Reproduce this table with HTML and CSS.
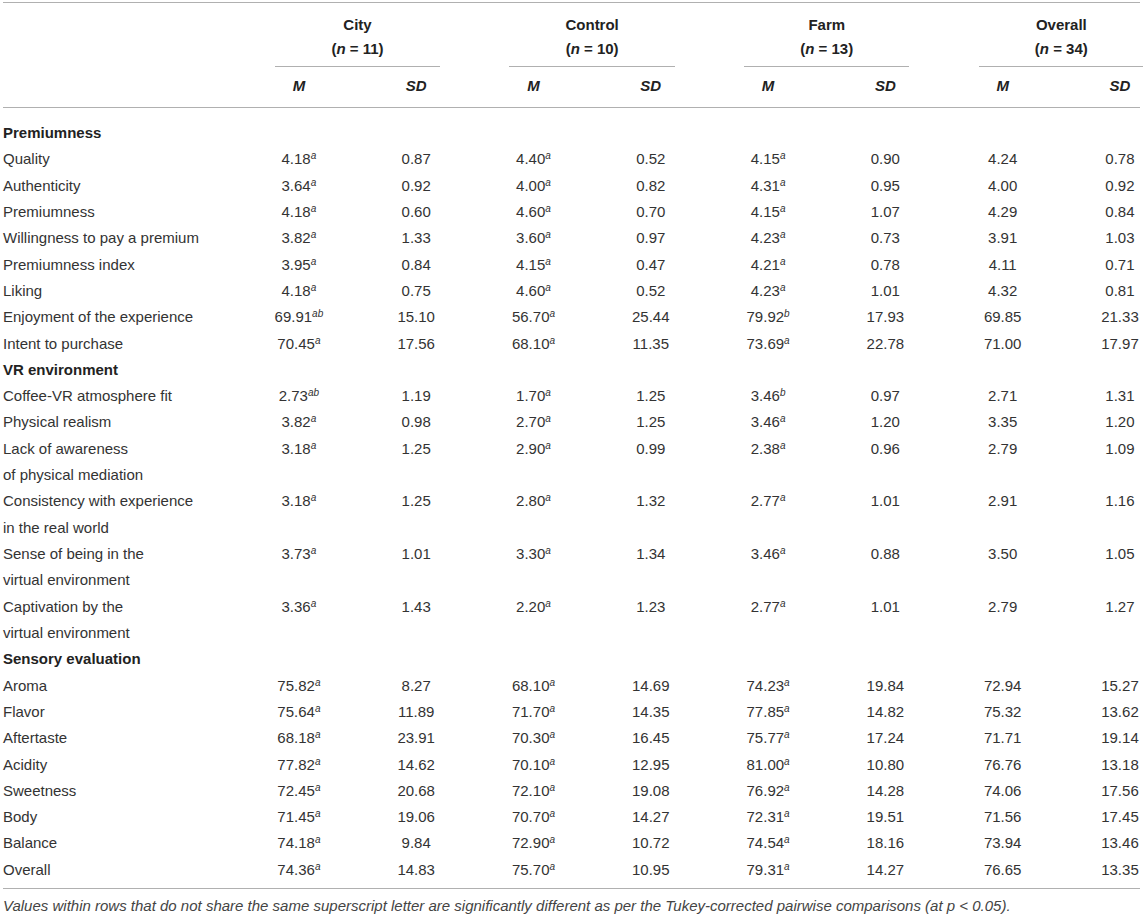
FILE: index.html
```html
<!DOCTYPE html>
<html>
<head>
<meta charset="utf-8">
<link rel="stylesheet" href="styles.css">
</head>
<body>
<div class="page">
  <div class="tbl">
    <div class="thead">
      <div class="row grp-row">
        <div class="lbl"></div>
        <div class="grp"><div class="grp-in">City<br>(<i>n</i> = 11)</div></div>
        <div class="grp"><div class="grp-in">Control<br>(<i>n</i> = 10)</div></div>
        <div class="grp"><div class="grp-in">Farm<br>(<i>n</i> = 13)</div></div>
        <div class="grp"><div class="grp-in">Overall<br>(<i>n</i> = 34)</div></div>
      </div>
      <div class="row ms-row">
        <div class="lbl"></div>
        <div class="c">M</div><div class="c">SD</div>
        <div class="c">M</div><div class="c">SD</div>
        <div class="c">M</div><div class="c">SD</div>
        <div class="c">M</div><div class="c">SD</div>
      </div>
    </div>
    <div class="tbody">
      <div class="sec">Premiumness</div>
      <div class="row"><div class="lbl">Quality</div><div class="c">4.18<sup>a</sup></div><div class="c">0.87</div><div class="c">4.40<sup>a</sup></div><div class="c">0.52</div><div class="c">4.15<sup>a</sup></div><div class="c">0.90</div><div class="c">4.24</div><div class="c">0.78</div></div>
      <div class="row"><div class="lbl">Authenticity</div><div class="c">3.64<sup>a</sup></div><div class="c">0.92</div><div class="c">4.00<sup>a</sup></div><div class="c">0.82</div><div class="c">4.31<sup>a</sup></div><div class="c">0.95</div><div class="c">4.00</div><div class="c">0.92</div></div>
      <div class="row"><div class="lbl">Premiumness</div><div class="c">4.18<sup>a</sup></div><div class="c">0.60</div><div class="c">4.60<sup>a</sup></div><div class="c">0.70</div><div class="c">4.15<sup>a</sup></div><div class="c">1.07</div><div class="c">4.29</div><div class="c">0.84</div></div>
      <div class="row"><div class="lbl">Willingness to pay a premium</div><div class="c">3.82<sup>a</sup></div><div class="c">1.33</div><div class="c">3.60<sup>a</sup></div><div class="c">0.97</div><div class="c">4.23<sup>a</sup></div><div class="c">0.73</div><div class="c">3.91</div><div class="c">1.03</div></div>
      <div class="row"><div class="lbl">Premiumness index</div><div class="c">3.95<sup>a</sup></div><div class="c">0.84</div><div class="c">4.15<sup>a</sup></div><div class="c">0.47</div><div class="c">4.21<sup>a</sup></div><div class="c">0.78</div><div class="c">4.11</div><div class="c">0.71</div></div>
      <div class="row"><div class="lbl">Liking</div><div class="c">4.18<sup>a</sup></div><div class="c">0.75</div><div class="c">4.60<sup>a</sup></div><div class="c">0.52</div><div class="c">4.23<sup>a</sup></div><div class="c">1.01</div><div class="c">4.32</div><div class="c">0.81</div></div>
      <div class="row"><div class="lbl">Enjoyment of the experience</div><div class="c">69.91<sup>ab</sup></div><div class="c">15.10</div><div class="c">56.70<sup>a</sup></div><div class="c">25.44</div><div class="c">79.92<sup>b</sup></div><div class="c">17.93</div><div class="c">69.85</div><div class="c">21.33</div></div>
      <div class="row"><div class="lbl">Intent to purchase</div><div class="c">70.45<sup>a</sup></div><div class="c">17.56</div><div class="c">68.10<sup>a</sup></div><div class="c">11.35</div><div class="c">73.69<sup>a</sup></div><div class="c">22.78</div><div class="c">71.00</div><div class="c">17.97</div></div>
      <div class="sec">VR environment</div>
      <div class="row"><div class="lbl">Coffee-VR atmosphere fit</div><div class="c">2.73<sup>ab</sup></div><div class="c">1.19</div><div class="c">1.70<sup>a</sup></div><div class="c">1.25</div><div class="c">3.46<sup>b</sup></div><div class="c">0.97</div><div class="c">2.71</div><div class="c">1.31</div></div>
      <div class="row"><div class="lbl">Physical realism</div><div class="c">3.82<sup>a</sup></div><div class="c">0.98</div><div class="c">2.70<sup>a</sup></div><div class="c">1.25</div><div class="c">3.46<sup>a</sup></div><div class="c">1.20</div><div class="c">3.35</div><div class="c">1.20</div></div>
      <div class="row"><div class="lbl">Lack of awareness<br>of physical mediation</div><div class="c">3.18<sup>a</sup></div><div class="c">1.25</div><div class="c">2.90<sup>a</sup></div><div class="c">0.99</div><div class="c">2.38<sup>a</sup></div><div class="c">0.96</div><div class="c">2.79</div><div class="c">1.09</div></div>
      <div class="row"><div class="lbl">Consistency with experience<br>in the real world</div><div class="c">3.18<sup>a</sup></div><div class="c">1.25</div><div class="c">2.80<sup>a</sup></div><div class="c">1.32</div><div class="c">2.77<sup>a</sup></div><div class="c">1.01</div><div class="c">2.91</div><div class="c">1.16</div></div>
      <div class="row"><div class="lbl">Sense of being in the<br>virtual environment</div><div class="c">3.73<sup>a</sup></div><div class="c">1.01</div><div class="c">3.30<sup>a</sup></div><div class="c">1.34</div><div class="c">3.46<sup>a</sup></div><div class="c">0.88</div><div class="c">3.50</div><div class="c">1.05</div></div>
      <div class="row"><div class="lbl">Captivation by the<br>virtual environment</div><div class="c">3.36<sup>a</sup></div><div class="c">1.43</div><div class="c">2.20<sup>a</sup></div><div class="c">1.23</div><div class="c">2.77<sup>a</sup></div><div class="c">1.01</div><div class="c">2.79</div><div class="c">1.27</div></div>
      <div class="sec">Sensory evaluation</div>
      <div class="row"><div class="lbl">Aroma</div><div class="c">75.82<sup>a</sup></div><div class="c">8.27</div><div class="c">68.10<sup>a</sup></div><div class="c">14.69</div><div class="c">74.23<sup>a</sup></div><div class="c">19.84</div><div class="c">72.94</div><div class="c">15.27</div></div>
      <div class="row"><div class="lbl">Flavor</div><div class="c">75.64<sup>a</sup></div><div class="c">11.89</div><div class="c">71.70<sup>a</sup></div><div class="c">14.35</div><div class="c">77.85<sup>a</sup></div><div class="c">14.82</div><div class="c">75.32</div><div class="c">13.62</div></div>
      <div class="row"><div class="lbl">Aftertaste</div><div class="c">68.18<sup>a</sup></div><div class="c">23.91</div><div class="c">70.30<sup>a</sup></div><div class="c">16.45</div><div class="c">75.77<sup>a</sup></div><div class="c">17.24</div><div class="c">71.71</div><div class="c">19.14</div></div>
      <div class="row"><div class="lbl">Acidity</div><div class="c">77.82<sup>a</sup></div><div class="c">14.62</div><div class="c">70.10<sup>a</sup></div><div class="c">12.95</div><div class="c">81.00<sup>a</sup></div><div class="c">10.80</div><div class="c">76.76</div><div class="c">13.18</div></div>
      <div class="row"><div class="lbl">Sweetness</div><div class="c">72.45<sup>a</sup></div><div class="c">20.68</div><div class="c">72.10<sup>a</sup></div><div class="c">19.08</div><div class="c">76.92<sup>a</sup></div><div class="c">14.28</div><div class="c">74.06</div><div class="c">17.56</div></div>
      <div class="row"><div class="lbl">Body</div><div class="c">71.45<sup>a</sup></div><div class="c">19.06</div><div class="c">70.70<sup>a</sup></div><div class="c">14.27</div><div class="c">72.31<sup>a</sup></div><div class="c">19.51</div><div class="c">71.56</div><div class="c">17.45</div></div>
      <div class="row"><div class="lbl">Balance</div><div class="c">74.18<sup>a</sup></div><div class="c">9.84</div><div class="c">72.90<sup>a</sup></div><div class="c">10.72</div><div class="c">74.54<sup>a</sup></div><div class="c">18.16</div><div class="c">73.94</div><div class="c">13.46</div></div>
      <div class="row"><div class="lbl">Overall</div><div class="c">74.36<sup>a</sup></div><div class="c">14.83</div><div class="c">75.70<sup>a</sup></div><div class="c">10.95</div><div class="c">79.31<sup>a</sup></div><div class="c">14.27</div><div class="c">76.65</div><div class="c">13.35</div></div>
    </div>
  </div>
  <p class="note">Values within rows that do not share the same superscript letter are significantly different as per the Tukey-corrected pairwise comparisons (at p &lt; 0.05).</p>
</div>
</body>
</html>
```
FILE: styles.css
```css
html, body {
  margin: 0;
  padding: 0;
  background: #ffffff;
}
body {
  font-family: "Liberation Sans", Arial, sans-serif;
  font-size: 15px;
  color: #333333;
}
.page {
  padding: 2px 3px 0 3px;
  width: 1137px;
}
.tbl {
  border-top: 1px solid #b0b0b0;
  border-bottom: 1px solid #b0b0b0;
}
.row {
  display: grid;
  grid-template-columns: 198.6px repeat(8, 40px);
  column-gap: 77.3px;
  line-height: 26.32px;
  white-space: nowrap;
}
.lbl {
  white-space: nowrap;
}
.c {
  justify-self: center;
  white-space: nowrap;
}
sup {
  font-size: 10px;
  font-style: italic;
  line-height: 0;
  vertical-align: 5px;
}
.thead {
  border-bottom: 1px solid #b0b0b0;
  font-weight: bold;
  color: #222222;
}
.grp-row {
  line-height: 24px;
  padding-top: 10px;
}
.grp {
  grid-column: span 2;
  text-align: center;
}
.grp-in {
  margin: 0 -4px;
  padding-bottom: 5px;
  border-bottom: 1px solid #b0b0b0;
}
.ms-row {
  line-height: 24px;
  padding: 7px 0 9px 0;
  font-style: italic;
}
.tbody {
  padding: 12px 0 5px 0;
}
.sec {
  font-weight: bold;
  color: #222222;
  line-height: 26.32px;
}
.note {
  margin: 0;
  padding-top: 7px;
  line-height: 20px;
  font-size: 15px;
  font-style: italic;
  color: #444444;
}
```
